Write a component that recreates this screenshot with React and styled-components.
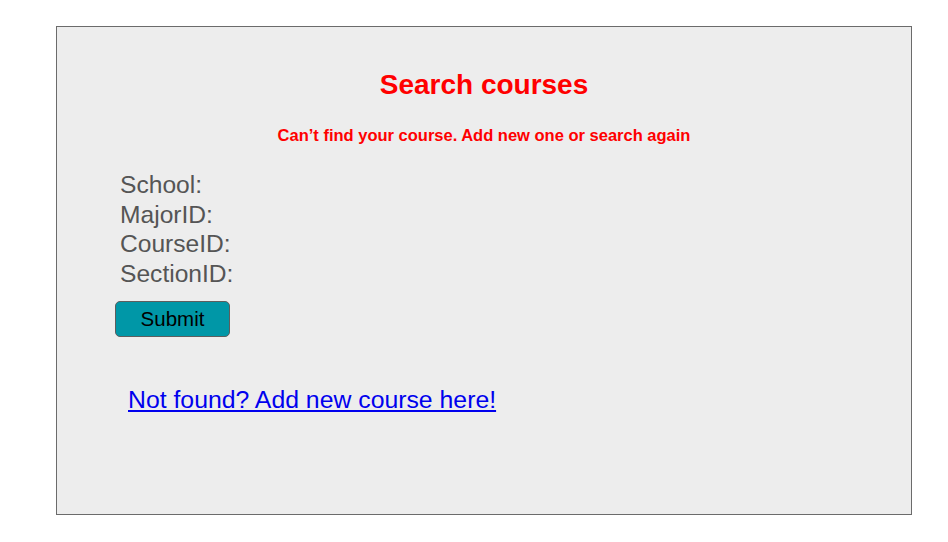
import React from "react";
import styled, { createGlobalStyle } from "styled-components";

const GlobalStyle = createGlobalStyle`
  body {
    margin: 0;
    background: #ffffff;
    font-family: "Liberation Sans", Arial, sans-serif;
  }
`;

const Panel = styled.div`
  box-sizing: border-box;
  width: 856px;
  height: 489px;
  margin: 26px 0 0 56px;
  background: #ededed;
  border: 1px solid #6b6b6b;
  padding-top: 42px;
`;

const Title = styled.h1`
  margin: 0;
  text-align: center;
  color: #ff0000;
  font-size: 28px;
  font-weight: bold;
  line-height: 32px;
`;

const Notice = styled.p`
  margin: 25px 0 0;
  text-align: center;
  color: #ff0000;
  font-size: 16.5px;
  font-weight: bold;
  line-height: 18px;
`;

const Form = styled.form`
  display: flex;
  flex-direction: column;
  align-items: flex-start;
  margin: 26px 0 0 58px;
`;

const Label = styled.div`
  margin-left: 5px;
  color: #555555;
  font-size: 24.6px;
  line-height: 29.7px;
`;

const Button = styled.button`
  box-sizing: border-box;
  width: 115px;
  height: 36px;
  margin-top: 12px;
  background: #0097a7;
  border: 1px solid #5e5e5e;
  border-radius: 5px;
  color: #000000;
  font-family: "Liberation Sans", Arial, sans-serif;
  font-size: 20.5px;
  padding: 0;
`;

const AddLink = styled.a`
  display: inline-block;
  margin: 49px 0 0 71px;
  color: #0000ee;
  font-size: 24.8px;
  line-height: 28px;
  text-decoration: underline;
`;

const fields = ["School:", "MajorID:", "CourseID:", "SectionID:"];

const App = () => {
  return (
    <>
      <GlobalStyle />
      <Panel>
        <Title>Search courses</Title>
        <Notice>Can’t find your course. Add new one or search again</Notice>
        <Form onSubmit={(e) => e.preventDefault()}>
          {fields.map((f) => (
            <Label key={f}>{f}</Label>
          ))}
          <Button type="submit">Submit</Button>
        </Form>
        <AddLink href="#">Not found? Add new course here!</AddLink>
      </Panel>
    </>
  );
};

export default App;
